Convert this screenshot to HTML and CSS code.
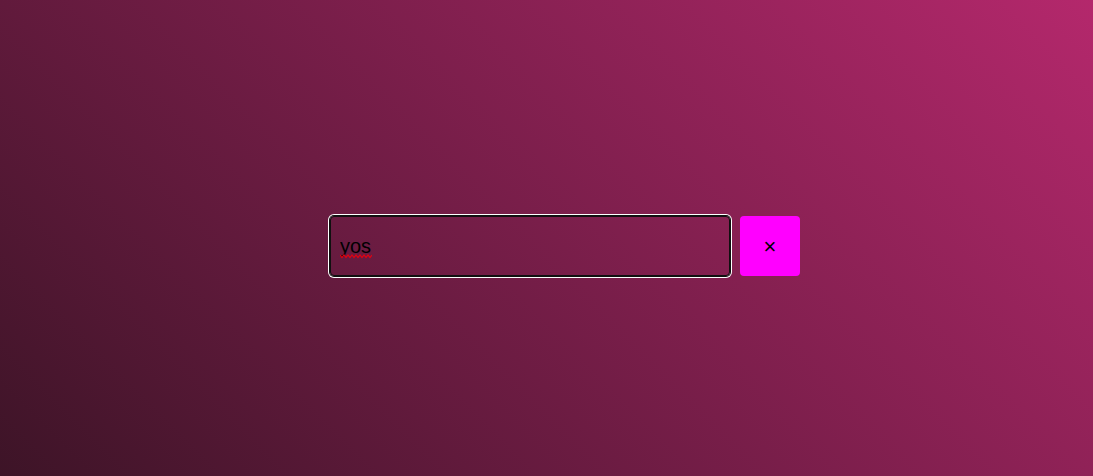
FILE: index.html
```html
<!DOCTYPE html>
<html>
<head>
<meta charset="utf-8">
<link rel="stylesheet" href="styles.css">
</head>
<body>
<div class="page">
  <div class="bar">
    <div class="field-wrap">
      <input class="field" type="text" value="yos" spellcheck="true">
      <svg class="squiggle" width="32" height="5" viewBox="0 0 32 5" aria-hidden="true">
        <polyline points="0,1 2,3.5 4,1 6,3.5 8,1 10,3.5 12,1 14,3.5 16,1 18,3.5 20,1 22,3.5 24,1 26,3.5 28,1 30,3.5 32,1" fill="none" stroke="#e5000f" stroke-width="1.2"/>
      </svg>
    </div>
    <button class="clear" type="button">×</button>
  </div>
</div>
</body>
</html>
```
FILE: styles.css
```css
html, body {
  margin: 0;
  height: 100%;
}
body {
  background: linear-gradient(45deg, #3d1427 0%, #b4286c 100%);
  font-family: "Liberation Sans", Arial, sans-serif;
}
.page {
  height: 100%;
  box-sizing: border-box;
  display: flex;
  align-items: center;
  justify-content: center;
  padding: 16px 0 0 37px;
}
.bar {
  display: flex;
  gap: 10px;
  align-items: center;
}
.field-wrap {
  position: relative;
  display: flex;
}
.field {
  width: 400px;
  height: 60px;
  box-sizing: border-box;
  background: transparent;
  border: 1px solid #101010;
  border-radius: 4px;
  box-shadow: 0 0 0 1px #101010, 0 0 0 2px #fff;
  padding: 0 9px;
  font-family: "Liberation Sans", Arial, sans-serif;
  font-size: 20px;
  color: #000;
  outline: none;
}
.squiggle {
  position: absolute;
  left: 10px;
  top: 38px;
  pointer-events: none;
}
.clear {
  width: 60px;
  height: 60px;
  border: none;
  border-radius: 4px;
  background: #ff00ff;
  color: #000;
  font-family: "Liberation Sans", Arial, sans-serif;
  font-size: 22px;
  padding: 2px 0 0;
  cursor: pointer;
}
```
